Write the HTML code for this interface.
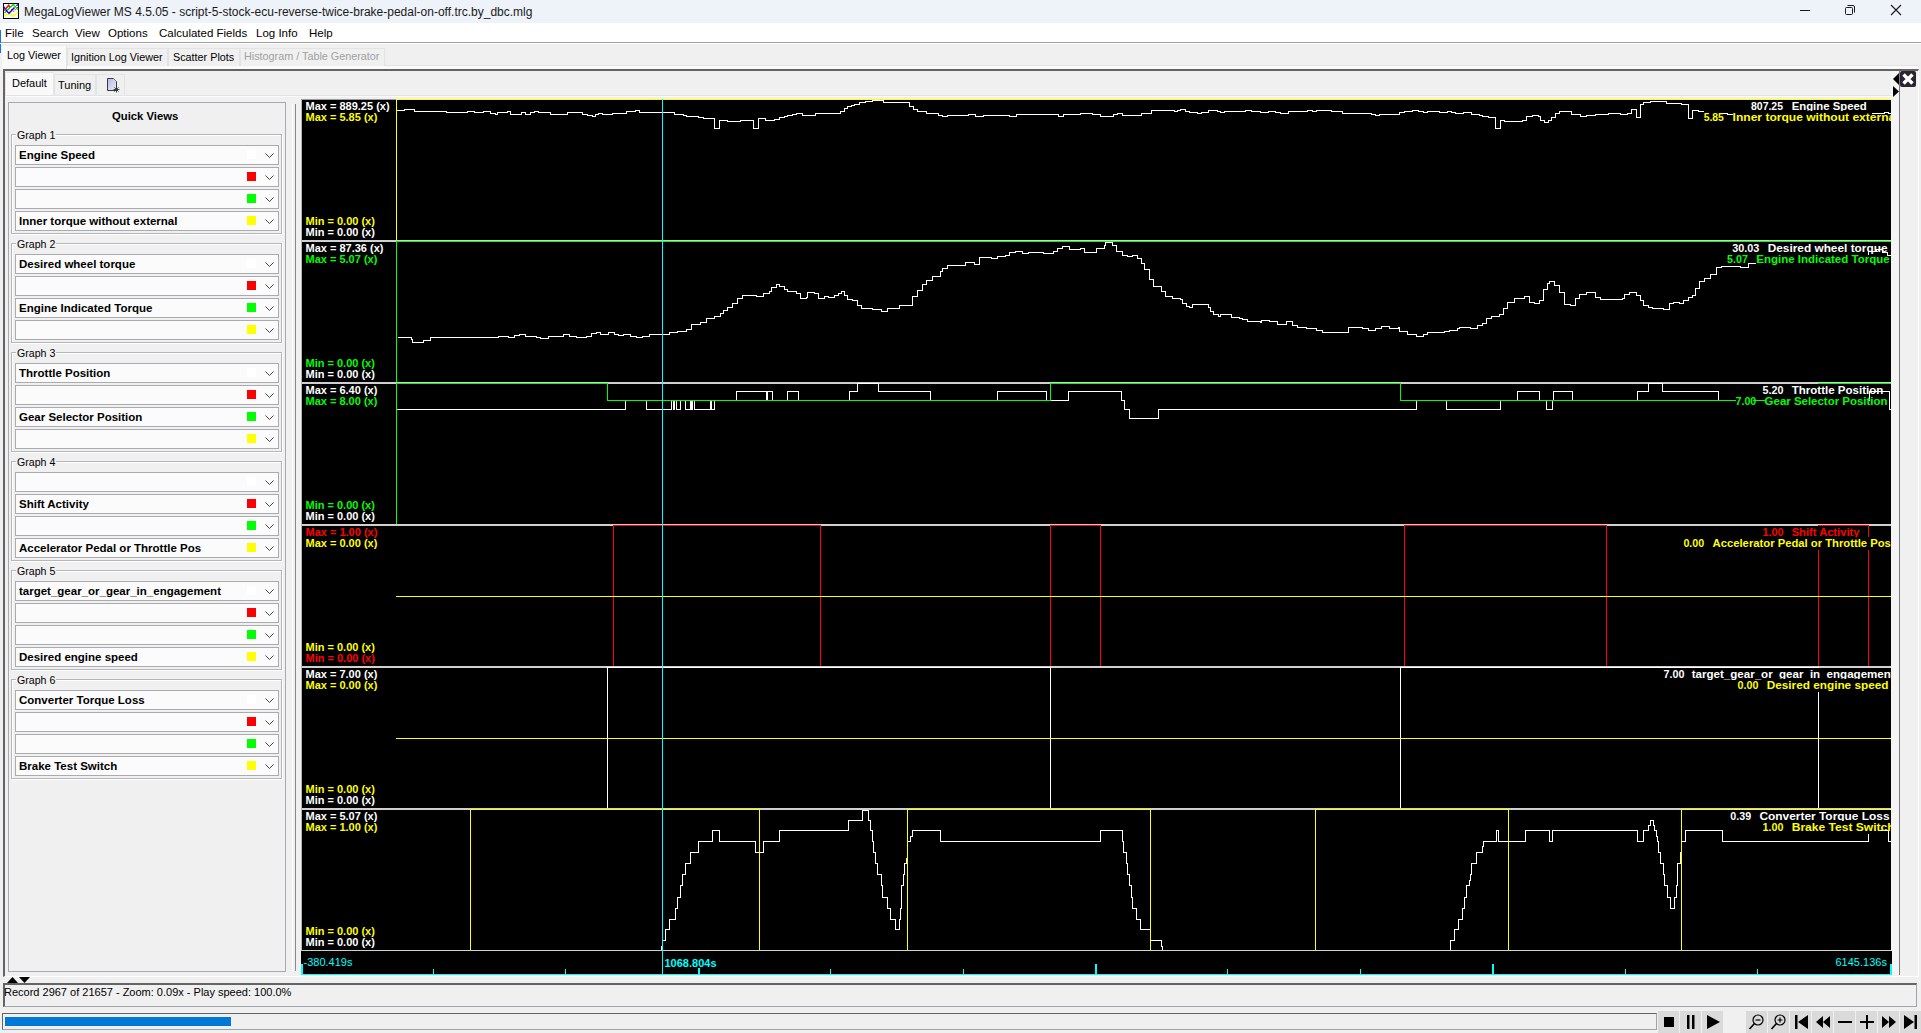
<!DOCTYPE html><html><head><meta charset="utf-8"><title>MegaLogViewer</title><style>
*{box-sizing:border-box;margin:0;padding:0}
html,body{width:1921px;height:1033px;overflow:hidden;background:#f0f0f0;font-family:"Liberation Sans",sans-serif;color:#000}
.a{position:absolute}
.t{position:absolute;white-space:nowrap;line-height:1}
.combo{position:absolute;left:15px;width:264px;height:20px;background:#fbfbfb;border:1px solid #a9abaf}
.combo .lbl{position:absolute;left:3px;top:4px;font-weight:bold;font-size:11.5px;white-space:nowrap;line-height:1}
.combo .sw{position:absolute;left:231px;top:4px;width:9px;height:9px}
.combo svg{position:absolute;left:249px;top:7px}
.grp{position:absolute;left:11px;width:271px;height:100px;border:1px solid #b4b6ba;box-shadow:inset 1px 1px 0 #fff, 1px 1px 0 #fff}
.glbl{position:absolute;left:16px;font-size:10.6px;background:#f0f0f0;padding:0 1px;white-space:nowrap;line-height:1}
</style></head><body>
<div class="a" style="left:0;top:0;width:1921px;height:23px;background:#eef2f9"></div>
<svg class="a" style="left:3px;top:3px" width="16" height="16" viewBox="0 0 16 16">
<rect x="0.5" y="0.5" width="15" height="15" fill="#fff" stroke="#000"/>
<polyline points="1.4,13.5 3.3,12 7.2,10.6 10.1,13.5 14.9,9.3" fill="none" stroke="#ff0" stroke-width="1.5"/>
<polyline points="1.4,10.1 4,7.7 6.7,4.7 10.4,1.4 14.9,6.7" fill="none" stroke="#0d0" stroke-width="1.4"/>
<polyline points="0.4,3.3 4,8.4 6,10.3 11.5,4.5" fill="none" stroke="#00f" stroke-width="1.4"/>
<polyline points="13.5,2.8 14.9,1.4" fill="none" stroke="#00f" stroke-width="1.4"/>
<polyline points="1.3,7.5 5.7,2.2 6.8,4.3" fill="none" stroke="#f00" stroke-width="1.4"/>
<polyline points="10.4,8.5 12.5,6.4" fill="none" stroke="#f00" stroke-width="1.1" stroke-dasharray="1 1"/>
<rect x="8" y="6" width="1" height="1" fill="#f00"/><rect x="14" y="4" width="1" height="1" fill="#f00"/>
</svg>
<div class="t" style="left:24px;top:6px;font-size:12px;color:#1a1a1a">MegaLogViewer MS 4.5.05 - script-5-stock-ecu-reverse-twice-brake-pedal-on-off.trc.by_dbc.mlg</div>
<div class="a" style="left:1800px;top:10px;width:10px;height:1px;background:#1a1a1a"></div>
<svg class="a" style="left:1844px;top:4px" width="12" height="12" viewBox="0 0 12 12"><rect x="1.5" y="3.5" width="7" height="7" rx="1" fill="none" stroke="#1a1a1a"/><path d="M3.5 1.5 H9 a1.5 1.5 0 0 1 1.5 1.5 V8.5" fill="none" stroke="#1a1a1a"/></svg>
<svg class="a" style="left:1890px;top:4px" width="12" height="12" viewBox="0 0 12 12"><path d="M1 1 L11 11 M11 1 L1 11" stroke="#1a1a1a" stroke-width="1.1"/></svg>
<div class="a" style="left:0;top:23px;width:1921px;height:19px;background:#fff"></div>
<div class="a" style="left:0;top:42px;width:1921px;height:1px;background:#a0a0a0"></div>
<div class="t" style="left:5px;top:28px;font-size:11.5px">File</div>
<div class="t" style="left:32px;top:28px;font-size:11.5px">Search</div>
<div class="t" style="left:75px;top:28px;font-size:11.5px">View</div>
<div class="t" style="left:108px;top:28px;font-size:11.5px">Options</div>
<div class="t" style="left:159px;top:28px;font-size:11.5px">Calculated Fields</div>
<div class="t" style="left:256px;top:28px;font-size:11.5px">Log Info</div>
<div class="t" style="left:309px;top:28px;font-size:11.5px">Help</div>
<div class="a" style="left:0;top:30px;width:1px;height:23px;background:#1473e6"></div>
<div class="a" style="left:2px;top:46px;width:65px;height:24px;background:#f9f9f9;border-right:1px solid #e3e3e3"></div>
<div class="t" style="left:7px;top:50px;font-size:10.8px">Log Viewer</div>
<div class="a" style="left:67px;top:48px;width:101px;height:18px;background:#f0f0f0;border:1px solid #e3e3e3;border-bottom:none"></div>
<div class="t" style="left:71px;top:52px;font-size:10.8px">Ignition Log Viewer</div>
<div class="a" style="left:168px;top:48px;width:72px;height:18px;background:#f0f0f0;border:1px solid #e3e3e3;border-bottom:none"></div>
<div class="t" style="left:173px;top:52px;font-size:10.8px">Scatter Plots</div>
<div class="a" style="left:240px;top:48px;width:145px;height:18px;background:#f0f0f0;border:1px solid #e3e3e3;border-bottom:none"></div>
<div class="t" style="left:244px;top:51px;font-size:10.8px;color:#a0a0a0">Histogram / Table Generator</div>
<div class="a" style="left:385px;top:65px;width:1533px;height:1px;background:#e3e3e3"></div>
<div class="a" style="left:67px;top:66px;width:1851px;height:3px;background:#fafafa"></div>
<div class="a" style="left:0;top:43px;width:1921px;height:1px;background:#fff"></div>
<div class="a" style="left:3px;top:69px;width:1916px;height:908px;border-top:2px solid #646464;border-left:2px solid #646464;border-right:1px solid #fff;border-bottom:1px solid #fff"></div>
<div class="a" style="left:5px;top:72px;width:49px;height:24px;background:#f9f9f9;border:1px solid #e6e6e6;border-bottom:none"></div>
<div class="t" style="left:12px;top:78px;font-size:11px">Default</div>
<div class="a" style="left:54px;top:74px;width:42px;height:21px;background:#f0f0f0;border:1px solid #e3e3e3;border-bottom:none"></div>
<div class="t" style="left:58px;top:80px;font-size:11px">Tuning</div>
<div class="a" style="left:96px;top:74px;width:29px;height:21px;background:#f0f0f0;border:1px solid #e3e3e3;border-bottom:none"></div>
<svg class="a" style="left:105px;top:76px" width="16" height="17" viewBox="0 0 16 17"><defs><linearGradient id="dg" x1="0" y1="0" x2="1" y2="1"><stop offset="0" stop-color="#b8b8e8"/><stop offset="1" stop-color="#ececf8"/></linearGradient></defs><path d="M2.5 2.5 H8.5 L11.5 5.5 V14.5 H2.5 Z" fill="url(#dg)" stroke="#3a3a3a"/><path d="M8.5 2.5 L11.5 5.5" stroke="#777"/><path d="M11.5 10.5 V16.5 M8.5 13.5 H14.5 M9.4 11.4 L13.6 15.6 M13.6 11.4 L9.4 15.6" stroke="#333" stroke-width="0.9"/></svg>
<div class="a" style="left:5px;top:95px;width:1886px;height:1px;background:#e3e3e3"></div>
<div class="a" style="left:5px;top:96px;width:1886px;height:1px;background:#fbfbfb"></div>
<div class="a" style="left:8px;top:102px;width:278px;height:870px;border:1px solid #a7aab0"></div>
<div class="t" style="left:112px;top:111px;font-size:11.3px;font-weight:bold">Quick Views</div>
<div class="grp" style="top:134px"></div>
<div class="glbl" style="top:130px">Graph 1</div>
<div class="combo" style="top:145px"><div class="lbl">Engine Speed</div><div class="sw" style="background:#ffffff"></div><svg width="9" height="5" viewBox="0 0 9 5"><path d="M0.5 0.5 L4.5 4.5 L8.5 0.5" fill="none" stroke="#444" stroke-width="1"/></svg></div>
<div class="combo" style="top:167px"><div class="lbl"></div><div class="sw" style="background:#ff0000"></div><svg width="9" height="5" viewBox="0 0 9 5"><path d="M0.5 0.5 L4.5 4.5 L8.5 0.5" fill="none" stroke="#444" stroke-width="1"/></svg></div>
<div class="combo" style="top:189px"><div class="lbl"></div><div class="sw" style="background:#00ff00"></div><svg width="9" height="5" viewBox="0 0 9 5"><path d="M0.5 0.5 L4.5 4.5 L8.5 0.5" fill="none" stroke="#444" stroke-width="1"/></svg></div>
<div class="combo" style="top:211px"><div class="lbl">Inner torque without external</div><div class="sw" style="background:#ffff00"></div><svg width="9" height="5" viewBox="0 0 9 5"><path d="M0.5 0.5 L4.5 4.5 L8.5 0.5" fill="none" stroke="#444" stroke-width="1"/></svg></div>
<div class="grp" style="top:243px"></div>
<div class="glbl" style="top:239px">Graph 2</div>
<div class="combo" style="top:254px"><div class="lbl">Desired wheel torque</div><div class="sw" style="background:#ffffff"></div><svg width="9" height="5" viewBox="0 0 9 5"><path d="M0.5 0.5 L4.5 4.5 L8.5 0.5" fill="none" stroke="#444" stroke-width="1"/></svg></div>
<div class="combo" style="top:276px"><div class="lbl"></div><div class="sw" style="background:#ff0000"></div><svg width="9" height="5" viewBox="0 0 9 5"><path d="M0.5 0.5 L4.5 4.5 L8.5 0.5" fill="none" stroke="#444" stroke-width="1"/></svg></div>
<div class="combo" style="top:298px"><div class="lbl">Engine Indicated Torque</div><div class="sw" style="background:#00ff00"></div><svg width="9" height="5" viewBox="0 0 9 5"><path d="M0.5 0.5 L4.5 4.5 L8.5 0.5" fill="none" stroke="#444" stroke-width="1"/></svg></div>
<div class="combo" style="top:320px"><div class="lbl"></div><div class="sw" style="background:#ffff00"></div><svg width="9" height="5" viewBox="0 0 9 5"><path d="M0.5 0.5 L4.5 4.5 L8.5 0.5" fill="none" stroke="#444" stroke-width="1"/></svg></div>
<div class="grp" style="top:352px"></div>
<div class="glbl" style="top:348px">Graph 3</div>
<div class="combo" style="top:363px"><div class="lbl">Throttle Position</div><div class="sw" style="background:#ffffff"></div><svg width="9" height="5" viewBox="0 0 9 5"><path d="M0.5 0.5 L4.5 4.5 L8.5 0.5" fill="none" stroke="#444" stroke-width="1"/></svg></div>
<div class="combo" style="top:385px"><div class="lbl"></div><div class="sw" style="background:#ff0000"></div><svg width="9" height="5" viewBox="0 0 9 5"><path d="M0.5 0.5 L4.5 4.5 L8.5 0.5" fill="none" stroke="#444" stroke-width="1"/></svg></div>
<div class="combo" style="top:407px"><div class="lbl">Gear Selector Position</div><div class="sw" style="background:#00ff00"></div><svg width="9" height="5" viewBox="0 0 9 5"><path d="M0.5 0.5 L4.5 4.5 L8.5 0.5" fill="none" stroke="#444" stroke-width="1"/></svg></div>
<div class="combo" style="top:429px"><div class="lbl"></div><div class="sw" style="background:#ffff00"></div><svg width="9" height="5" viewBox="0 0 9 5"><path d="M0.5 0.5 L4.5 4.5 L8.5 0.5" fill="none" stroke="#444" stroke-width="1"/></svg></div>
<div class="grp" style="top:461px"></div>
<div class="glbl" style="top:457px">Graph 4</div>
<div class="combo" style="top:472px"><div class="lbl"></div><div class="sw" style="background:#ffffff"></div><svg width="9" height="5" viewBox="0 0 9 5"><path d="M0.5 0.5 L4.5 4.5 L8.5 0.5" fill="none" stroke="#444" stroke-width="1"/></svg></div>
<div class="combo" style="top:494px"><div class="lbl">Shift Activity</div><div class="sw" style="background:#ff0000"></div><svg width="9" height="5" viewBox="0 0 9 5"><path d="M0.5 0.5 L4.5 4.5 L8.5 0.5" fill="none" stroke="#444" stroke-width="1"/></svg></div>
<div class="combo" style="top:516px"><div class="lbl"></div><div class="sw" style="background:#00ff00"></div><svg width="9" height="5" viewBox="0 0 9 5"><path d="M0.5 0.5 L4.5 4.5 L8.5 0.5" fill="none" stroke="#444" stroke-width="1"/></svg></div>
<div class="combo" style="top:538px"><div class="lbl">Accelerator Pedal or Throttle Pos</div><div class="sw" style="background:#ffff00"></div><svg width="9" height="5" viewBox="0 0 9 5"><path d="M0.5 0.5 L4.5 4.5 L8.5 0.5" fill="none" stroke="#444" stroke-width="1"/></svg></div>
<div class="grp" style="top:570px"></div>
<div class="glbl" style="top:566px">Graph 5</div>
<div class="combo" style="top:581px"><div class="lbl">target_gear_or_gear_in_engagement</div><div class="sw" style="background:#ffffff"></div><svg width="9" height="5" viewBox="0 0 9 5"><path d="M0.5 0.5 L4.5 4.5 L8.5 0.5" fill="none" stroke="#444" stroke-width="1"/></svg></div>
<div class="combo" style="top:603px"><div class="lbl"></div><div class="sw" style="background:#ff0000"></div><svg width="9" height="5" viewBox="0 0 9 5"><path d="M0.5 0.5 L4.5 4.5 L8.5 0.5" fill="none" stroke="#444" stroke-width="1"/></svg></div>
<div class="combo" style="top:625px"><div class="lbl"></div><div class="sw" style="background:#00ff00"></div><svg width="9" height="5" viewBox="0 0 9 5"><path d="M0.5 0.5 L4.5 4.5 L8.5 0.5" fill="none" stroke="#444" stroke-width="1"/></svg></div>
<div class="combo" style="top:647px"><div class="lbl">Desired engine speed</div><div class="sw" style="background:#ffff00"></div><svg width="9" height="5" viewBox="0 0 9 5"><path d="M0.5 0.5 L4.5 4.5 L8.5 0.5" fill="none" stroke="#444" stroke-width="1"/></svg></div>
<div class="grp" style="top:679px"></div>
<div class="glbl" style="top:675px">Graph 6</div>
<div class="combo" style="top:690px"><div class="lbl">Converter Torque Loss</div><div class="sw" style="background:#ffffff"></div><svg width="9" height="5" viewBox="0 0 9 5"><path d="M0.5 0.5 L4.5 4.5 L8.5 0.5" fill="none" stroke="#444" stroke-width="1"/></svg></div>
<div class="combo" style="top:712px"><div class="lbl"></div><div class="sw" style="background:#ff0000"></div><svg width="9" height="5" viewBox="0 0 9 5"><path d="M0.5 0.5 L4.5 4.5 L8.5 0.5" fill="none" stroke="#444" stroke-width="1"/></svg></div>
<div class="combo" style="top:734px"><div class="lbl"></div><div class="sw" style="background:#00ff00"></div><svg width="9" height="5" viewBox="0 0 9 5"><path d="M0.5 0.5 L4.5 4.5 L8.5 0.5" fill="none" stroke="#444" stroke-width="1"/></svg></div>
<div class="combo" style="top:756px"><div class="lbl">Brake Test Switch</div><div class="sw" style="background:#ffff00"></div><svg width="9" height="5" viewBox="0 0 9 5"><path d="M0.5 0.5 L4.5 4.5 L8.5 0.5" fill="none" stroke="#444" stroke-width="1"/></svg></div>
<div class="a" style="left:292px;top:104px;width:1px;height:867px;background:#fff"></div>
<div class="a" style="left:295px;top:104px;width:1px;height:867px;background:#8a8a8a"></div>
<svg class="a" style="left:6px;top:976px" width="26" height="8" viewBox="0 0 26 8"><path d="M1 7 L6.5 1 L12 7 Z" fill="#000"/><path d="M13 1 L24 1 L18.5 7 Z" fill="#000"/></svg>
<div class="a" style="left:1891px;top:71px;width:8px;height:904px;background:#f4f4f4"></div>
<div class="a" style="left:1899px;top:71px;width:1px;height:904px;background:#7a7a7a"></div>
<svg class="a" style="left:1892px;top:72px" width="8" height="26" viewBox="0 0 8 26"><path d="M7 1 L1 7 L7 13 Z" fill="#000"/><path d="M1 14 L7 19.5 L1 25 Z" fill="#000"/></svg>
<svg class="a" style="left:1900px;top:71px" width="16" height="16" viewBox="0 0 16 16"><rect x="0" y="0" width="16" height="16" rx="2" fill="#2a2530"/><path d="M3.5 3.5 L12.5 12.5 M12.5 3.5 L3.5 12.5" stroke="#fff" stroke-width="3.4"/></svg>
<div class="a" style="left:3px;top:983px;width:1914px;height:24px;border-top:2px solid #646464;border-left:2px solid #646464;border-right:1px solid #a0a3a8;border-bottom:1px solid #a0a3a8;background:#f0f0f0"></div>
<div class="t" style="left:4px;top:987px;font-size:11px">Record 2967 of 21657 - Zoom: 0.09x - Play speed: 100.0%</div>
<div class="a" style="left:2px;top:1013px;width:1655px;height:17px;border-top:1px solid #646464;border-left:1px solid #646464;border-right:1px solid #a0a3a8;border-bottom:1px solid #a0a3a8;background:#f0f0f0"></div>
<div class="a" style="left:5px;top:1017px;width:226px;height:9px;background:#0078d7"></div>
<svg class="a" style="left:1658px;top:1011px" width="21" height="22" viewBox="0 0 21 22"><rect x="0" y="0" width="21" height="22" fill="#dadada"/><rect x="6" y="6" width="10" height="10" fill="#000"/></svg>
<svg class="a" style="left:1680px;top:1011px" width="21" height="22" viewBox="0 0 21 22"><rect x="0" y="0" width="21" height="22" fill="#dadada"/><rect x="7" y="4" width="2.5" height="14" fill="#000"/><rect x="12" y="4" width="2.5" height="14" fill="#000"/></svg>
<svg class="a" style="left:1702px;top:1011px" width="21" height="22" viewBox="0 0 21 22"><rect x="0" y="0" width="21" height="22" fill="#dadada"/><path d="M5 4 L18 11 L5 18 Z" fill="#000"/></svg>
<svg class="a" style="left:1746px;top:1011px" width="21" height="22" viewBox="0 0 21 22"><rect x="0" y="0" width="21" height="22" fill="#dadada"/><circle cx="12" cy="9" r="5" fill="none" stroke="#000" stroke-width="1.2"/><path d="M9.5 9 h5" stroke="#000" stroke-width="1.2"/><path d="M8.5 12.5 L3.5 18" stroke="#000" stroke-width="1.6"/></svg>
<svg class="a" style="left:1768px;top:1011px" width="21" height="22" viewBox="0 0 21 22"><rect x="0" y="0" width="21" height="22" fill="#dadada"/><circle cx="12" cy="9" r="5" fill="none" stroke="#000" stroke-width="1.2"/><path d="M9.5 9 h5 M12 6.5 v5" stroke="#000" stroke-width="1.2"/><path d="M8.5 12.5 L3.5 18" stroke="#000" stroke-width="1.6"/></svg>
<svg class="a" style="left:1790px;top:1011px" width="21" height="22" viewBox="0 0 21 22"><rect x="0" y="0" width="21" height="22" fill="#dadada"/><rect x="5" y="4" width="2.5" height="14" fill="#000"/><path d="M18 4 L8 11 L18 18 Z" fill="#000"/></svg>
<svg class="a" style="left:1812px;top:1011px" width="21" height="22" viewBox="0 0 21 22"><rect x="0" y="0" width="21" height="22" fill="#dadada"/><path d="M11 5 L4 11 L11 17 Z M18 5 L11 11 L18 17 Z" fill="#000"/></svg>
<svg class="a" style="left:1834px;top:1011px" width="21" height="22" viewBox="0 0 21 22"><rect x="0" y="0" width="21" height="22" fill="#dadada"/><rect x="4" y="10" width="14" height="2" fill="#000"/></svg>
<svg class="a" style="left:1856px;top:1011px" width="21" height="22" viewBox="0 0 21 22"><rect x="0" y="0" width="21" height="22" fill="#dadada"/><rect x="4" y="10" width="14" height="2" fill="#000"/><rect x="10" y="4" width="2" height="14" fill="#000"/></svg>
<svg class="a" style="left:1878px;top:1011px" width="21" height="22" viewBox="0 0 21 22"><rect x="0" y="0" width="21" height="22" fill="#dadada"/><path d="M4 5 L11 11 L4 17 Z M11 5 L18 11 L11 17 Z" fill="#000"/></svg>
<svg class="a" style="left:1900px;top:1011px" width="21" height="22" viewBox="0 0 21 22"><rect x="0" y="0" width="21" height="22" fill="#dadada"/><path d="M4 4 L14 11 L4 18 Z" fill="#000"/><rect x="14.5" y="4" width="2.5" height="14" fill="#000"/></svg>
<svg class="a" style="left:301px;top:99px" width="1591" height="877" viewBox="301 99 1591 877" shape-rendering="crispEdges">
<rect x="301" y="99" width="1590" height="852" fill="#000"/>
<rect x="301" y="99" width="1" height="852" fill="#b4b4b4"/>
<rect x="301" y="99" width="95" height="1" fill="#9a9a9a"/>
<rect x="302" y="240" width="1589" height="2" fill="#d0d0d0"/>
<rect x="302" y="382" width="1589" height="2" fill="#d0d0d0"/>
<rect x="302" y="524" width="1589" height="2" fill="#d0d0d0"/>
<rect x="302" y="666" width="1589" height="2" fill="#d0d0d0"/>
<rect x="302" y="808" width="1589" height="2" fill="#d0d0d0"/>
<rect x="302" y="950" width="1589" height="1" fill="#d0d0d0"/>
<rect x="301" y="951" width="1591" height="23" fill="#000"/>
<rect x="301" y="974" width="1591" height="1" fill="#00ffff"/>
<rect x="301" y="964" width="2" height="10" fill="#00ffff"/>
<rect x="1095" y="964" width="2" height="10" fill="#00ffff"/>
<rect x="1492" y="964" width="2" height="10" fill="#00ffff"/>
<rect x="1890" y="964" width="2" height="10" fill="#00ffff"/>
<rect x="698" y="968" width="2" height="6" fill="#00ffff"/>
<rect x="433" y="969" width="1" height="5" fill="#00ffff"/>
<rect x="565" y="969" width="1" height="5" fill="#00ffff"/>
<rect x="830" y="969" width="1" height="5" fill="#00ffff"/>
<rect x="963" y="969" width="1" height="5" fill="#00ffff"/>
<rect x="1227" y="969" width="1" height="5" fill="#00ffff"/>
<rect x="1360" y="969" width="1" height="5" fill="#00ffff"/>
<rect x="1625" y="969" width="1" height="5" fill="#00ffff"/>
<rect x="1757" y="969" width="1" height="5" fill="#00ffff"/>
<defs><clipPath id="gc"><rect x="302" y="99" width="1589" height="852"/></clipPath></defs>
<g clip-path="url(#gc)">
<text x="305.5" y="110" font-family="Liberation Sans" font-weight="bold" font-size="11" fill="#ffffff" shape-rendering="auto">Max = 889.25 (x)</text>
<text x="305.5" y="121" font-family="Liberation Sans" font-weight="bold" font-size="11" fill="#ffff00" shape-rendering="auto">Max = 5.85 (x)</text>
<text x="305.5" y="225" font-family="Liberation Sans" font-weight="bold" font-size="11" fill="#ffff00" shape-rendering="auto">Min = 0.00 (x)</text>
<text x="305.5" y="236" font-family="Liberation Sans" font-weight="bold" font-size="11" fill="#ffffff" shape-rendering="auto">Min = 0.00 (x)</text>
<text x="305.5" y="252" font-family="Liberation Sans" font-weight="bold" font-size="11" fill="#ffffff" shape-rendering="auto">Max = 87.36 (x)</text>
<text x="305.5" y="263" font-family="Liberation Sans" font-weight="bold" font-size="11" fill="#00ff00" shape-rendering="auto">Max = 5.07 (x)</text>
<text x="305.5" y="367" font-family="Liberation Sans" font-weight="bold" font-size="11" fill="#00ff00" shape-rendering="auto">Min = 0.00 (x)</text>
<text x="305.5" y="378" font-family="Liberation Sans" font-weight="bold" font-size="11" fill="#ffffff" shape-rendering="auto">Min = 0.00 (x)</text>
<text x="305.5" y="394" font-family="Liberation Sans" font-weight="bold" font-size="11" fill="#ffffff" shape-rendering="auto">Max = 6.40 (x)</text>
<text x="305.5" y="405" font-family="Liberation Sans" font-weight="bold" font-size="11" fill="#00ff00" shape-rendering="auto">Max = 8.00 (x)</text>
<text x="305.5" y="509" font-family="Liberation Sans" font-weight="bold" font-size="11" fill="#00ff00" shape-rendering="auto">Min = 0.00 (x)</text>
<text x="305.5" y="520" font-family="Liberation Sans" font-weight="bold" font-size="11" fill="#ffffff" shape-rendering="auto">Min = 0.00 (x)</text>
<text x="305.5" y="536" font-family="Liberation Sans" font-weight="bold" font-size="11" fill="#ff0000" shape-rendering="auto">Max = 1.00 (x)</text>
<text x="305.5" y="547" font-family="Liberation Sans" font-weight="bold" font-size="11" fill="#ffff00" shape-rendering="auto">Max = 0.00 (x)</text>
<text x="305.5" y="651" font-family="Liberation Sans" font-weight="bold" font-size="11" fill="#ffff00" shape-rendering="auto">Min = 0.00 (x)</text>
<text x="305.5" y="662" font-family="Liberation Sans" font-weight="bold" font-size="11" fill="#ff0000" shape-rendering="auto">Min = 0.00 (x)</text>
<text x="305.5" y="678" font-family="Liberation Sans" font-weight="bold" font-size="11" fill="#ffffff" shape-rendering="auto">Max = 7.00 (x)</text>
<text x="305.5" y="689" font-family="Liberation Sans" font-weight="bold" font-size="11" fill="#ffff00" shape-rendering="auto">Max = 0.00 (x)</text>
<text x="305.5" y="793" font-family="Liberation Sans" font-weight="bold" font-size="11" fill="#ffff00" shape-rendering="auto">Min = 0.00 (x)</text>
<text x="305.5" y="804" font-family="Liberation Sans" font-weight="bold" font-size="11" fill="#ffffff" shape-rendering="auto">Min = 0.00 (x)</text>
<text x="305.5" y="820" font-family="Liberation Sans" font-weight="bold" font-size="11" fill="#ffffff" shape-rendering="auto">Max = 5.07 (x)</text>
<text x="305.5" y="831" font-family="Liberation Sans" font-weight="bold" font-size="11" fill="#ffff00" shape-rendering="auto">Max = 1.00 (x)</text>
<text x="305.5" y="935" font-family="Liberation Sans" font-weight="bold" font-size="11" fill="#ffff00" shape-rendering="auto">Min = 0.00 (x)</text>
<text x="305.5" y="946" font-family="Liberation Sans" font-weight="bold" font-size="11" fill="#ffffff" shape-rendering="auto">Min = 0.00 (x)</text>
<rect x="396" y="99" width="1496" height="1" fill="#ffff00"/>
<rect x="396" y="99" width="1" height="141" fill="#ffff00"/>
<path d="M396.5 110.5H404.5V109.5H414.5V111.5H446.5V112.5H467.5V111.5H474.5V112.5H483.5V111.5H490.5V113.5H495.5V114.5H497.5V112.5H507.5V111.5H510.5V114.5H521.5V112.5H525.5V114.5H530.5V112.5H534.5V111.5H538.5V112.5H550.5V114.5H567.5V112.5H582.5V114.5H587.5V115.5H592.5V116.5H595.5V114.5H598.5V113.5H602.5V114.5H612.5V113.5H626.5V111.5H635.5V110.5H639.5V112.5H662.5H674.5V114.5H683.5V115.5H686.5V116.5H698.5V117.5H703.5V118.5H714.5V128.5H719.5V120.5H727.5V121.5H740.5V120.5H753.5V128.5H758.5V118.5H765.5V120.5H774.5V119.5H779.5V117.5H784.5V116.5H787.5V115.5H792.5V114.5H796.5V113.5H802.5V115.5H815.5V113.5H840.5V111.5H844.5V108.5H847.5V106.5H851.5V105.5H854.5V104.5H859.5V102.5H865.5V101.5H872.5V100.5H883.5V102.5H909.5V106.5H913.5V109.5H917.5V111.5H926.5V113.5H938.5V115.5H942.5V116.5H947.5V115.5H968.5V114.5H975.5V116.5H983.5V115.5H1009.5V116.5H1016.5V114.5H1058.5V116.5H1063.5V114.5H1080.5V113.5H1092.5V114.5H1100.5V116.5H1108.5H1113.5V114.5H1117.5V113.5H1122.5V115.5H1141.5V113.5H1151.5V110.5H1157.5H1165.5H1174.5V111.5H1177.5V110.5H1180.5V109.5H1185.5V111.5H1189.5V112.5H1197.5V113.5H1201.5V112.5H1208.5V110.5H1217.5V111.5H1220.5V112.5H1224.5V111.5H1245.5V110.5H1251.5V111.5H1260.5V112.5H1268.5V111.5H1275.5V112.5H1280.5V113.5H1288.5V111.5H1307.5V110.5H1312.5V111.5H1316.5V110.5H1331.5V111.5H1342.5V113.5H1371.5V114.5H1375.5V115.5H1379.5V114.5H1395.5H1399.5V112.5H1404.5V111.5H1412.5V110.5H1418.5V111.5H1423.5V112.5H1427.5V111.5H1439.5V112.5H1447.5V111.5H1451.5V112.5H1455.5V113.5H1463.5V112.5H1471.5V114.5H1479.5V115.5H1482.5V116.5H1488.5V117.5H1495.5V128.5H1500.5V120.5H1504.5V121.5H1522.5V120.5H1526.5V116.5H1532.5V115.5H1538.5V116.5H1540.5V120.5H1544.5V122.5H1548.5V120.5H1551.5V117.5H1555.5V113.5H1559.5V111.5H1571.5V114.5H1580.5V116.5H1586.5V115.5H1595.5V114.5H1606.5H1608.5V113.5H1620.5V114.5H1627.5V113.5H1631.5V109.5H1636.5V117.5H1640.5V104.5H1643.5V102.5H1650.5V101.5H1658.5H1666.5V103.5H1674.5H1681.5V104.5H1688.5V118.5H1692.5V110.5H1698.5V111.5H1704.5V113.5H1727.5V114.5H1736.5V115.5H1760.5H1800.5V114.5H1840.5H1866.5V113.5H1884.5V112.5H1888.5V113.5H1891.5" fill="none" stroke="#ffffff" stroke-width="1"/>
<rect x="396" y="241" width="1496" height="1" fill="#00ff00"/>
<rect x="396" y="241" width="1" height="141" fill="#00ff00"/>
<path d="M397.5 337.5H404.5H407.5H411.5V339.5H412.5V342.5H419.5H423.5V340.5H430.5V337.5H451.5H462.5H466.5H471.5H498.5V336.5H502.5H508.5V337.5H514.5V335.5H519.5V334.5H525.5V336.5H536.5V337.5H540.5V338.5H548.5V336.5H554.5H563.5V334.5H569.5V336.5H576.5V337.5H586.5V336.5H591.5V333.5H596.5V332.5H600.5V334.5H608.5V332.5H614.5V334.5H618.5V335.5H623.5V334.5H630.5V336.5H636.5V337.5H642.5V336.5H649.5V334.5H669.5V332.5H677.5V331.5H686.5V329.5H691.5V324.5H700.5V322.5H706.5V318.5H714.5V316.5H720.5V313.5H723.5V310.5H727.5V307.5H732.5V303.5H737.5V298.5H742.5V295.5H756.5V296.5H763.5V293.5H769.5V291.5H771.5V287.5H776.5V284.5H779.5V286.5H784.5V289.5H787.5V291.5H796.5V293.5H800.5V298.5H806.5V297.5H807.5V292.5H814.5V293.5H818.5V298.5H824.5V296.5H828.5V297.5H834.5V295.5H838.5V293.5H841.5V291.5H844.5V295.5H847.5V299.5H852.5V300.5H857.5V305.5H861.5V308.5H872.5V309.5H881.5V311.5H887.5V308.5H899.5V305.5H912.5V296.5H917.5V290.5H922.5V284.5H926.5V280.5H932.5V276.5H940.5V271.5H942.5V268.5H947.5V265.5H965.5V262.5H974.5V264.5H979.5V257.5H991.5V258.5H997.5V256.5H1005.5V255.5H1009.5V252.5H1015.5V251.5H1022.5V253.5H1028.5V252.5H1043.5V253.5H1053.5V251.5H1057.5V248.5H1062.5V246.5H1069.5V249.5H1080.5V248.5H1084.5V252.5H1091.5H1096.5V248.5H1104.5V245.5H1105.5V242.5H1112.5V245.5H1116.5V251.5H1122.5V255.5H1127.5V256.5H1132.5V255.5H1137.5V258.5H1141.5V263.5H1144.5V269.5H1149.5V279.5H1153.5V286.5H1161.5V291.5H1165.5V296.5H1172.5V298.5H1180.5V299.5H1182.5V303.5H1186.5V306.5H1189.5V307.5H1192.5V304.5H1201.5H1208.5V307.5H1210.5V311.5H1213.5V314.5H1218.5V316.5H1220.5V314.5H1225.5H1231.5V317.5H1239.5V318.5H1242.5V319.5H1247.5V321.5H1260.5V322.5H1261.5V320.5H1269.5V321.5H1277.5V324.5H1286.5V321.5H1292.5V325.5H1297.5V327.5H1306.5V328.5H1316.5V330.5H1322.5V332.5H1343.5H1348.5V327.5H1362.5V328.5H1368.5V330.5H1375.5V328.5H1381.5V326.5H1389.5V328.5H1398.5V327.5H1399.5V331.5H1407.5V334.5H1416.5V336.5H1423.5V334.5H1427.5V332.5H1444.5V331.5H1449.5V330.5H1457.5V328.5H1459.5V327.5H1470.5V328.5H1477.5V325.5H1482.5V323.5H1486.5V318.5H1491.5V316.5H1499.5V314.5H1503.5V308.5H1507.5V302.5H1514.5V298.5H1524.5V296.5H1529.5V302.5H1534.5V303.5H1539.5V300.5H1543.5V289.5H1547.5V283.5H1549.5V281.5H1554.5V285.5H1559.5V292.5H1564.5V304.5H1570.5V305.5H1575.5V298.5H1579.5V294.5H1586.5V292.5H1595.5V297.5H1600.5V299.5H1622.5V298.5H1624.5V294.5H1629.5V292.5H1636.5V295.5H1640.5V300.5H1643.5V305.5H1648.5V307.5H1652.5V308.5H1663.5V309.5H1669.5V303.5H1673.5V302.5H1679.5V303.5H1683.5V300.5H1688.5V297.5H1692.5V295.5H1695.5V288.5H1699.5V281.5H1704.5V278.5H1710.5V274.5H1716.5V267.5H1721.5V266.5H1740.5V267.5H1748.5V263.5H1780.5V262.5H1800.5V258.5H1840.5V254.5H1868.5V251.5H1876.5V249.5H1882.5V252.5H1887.5V255.5H1891.5V256.5" fill="none" stroke="#ffffff" stroke-width="1"/>
<path d="M396.5 409.5H625.5V400.5H646.5V409.5H671.5V400.5H673.5V409.5H674.5V400.5H676.5V409.5H680.5V400.5H685.5V409.5H690.5V400.5H691.5V409.5H692.5V400.5H694.5V409.5H710.5V400.5H711.5V409.5H714.5V400.5H736.5V391.5H766.5V400.5H767.5V391.5H772.5V400.5H787.5V391.5H798.5V400.5H849.5V391.5H857.5V383.5H878.5V391.5H930.5V400.5H997.5V391.5H1046.5V400.5H1068.5V391.5H1121.5V400.5H1124.5V409.5H1129.5V418.5H1158.5V409.5H1416.5V400.5H1446.5V409.5H1500.5V400.5H1517.5V391.5H1539.5V400.5H1546.5V409.5H1552.5V400.5H1553.5V391.5H1572.5V400.5H1637.5V391.5H1648.5V383.5H1662.5V391.5H1718.5V400.5H1869.5V391.5H1889.5V400.5H1889.5V409.5H1891.5" fill="none" stroke="#ffffff" stroke-width="1"/>
<path d="M396.5 523.5H396.5V383.5H607.5V400.5H1050.5V383.5H1400.5V400.5H1818.5V383.5H1891.5" fill="none" stroke="#00ff00" stroke-width="1"/>
<path d="M396.5 666.5H613.5V525.5H820.5V666.5H1050.5V525.5H1100.5V666.5H1404.5V525.5H1606.5V666.5H1818.5V525.5H1868.5V666.5H1891.5" fill="none" stroke="#ff0000" stroke-width="1"/>
<rect x="396" y="596" width="1496" height="1" fill="#ffff00"/>
<path d="M396.5 808.5H607.5V667.5H1050.5V808.5H1400.5V667.5H1818.5V808.5H1891.5" fill="none" stroke="#ffffff" stroke-width="1"/>
<rect x="396" y="738" width="1496" height="1" fill="#ffff00"/>
<path d="M660.5 950.5H661.5V946.5H662.5V940.5H665.5V929.5H669.5V919.5H675.5V908.5H677.5V897.5H680.5V885.5H682.5V874.5H685.5V863.5H690.5V852.5H698.5V841.5H712.5V830.5H719.5V841.5H755.5V852.5H763.5V841.5H779.5V830.5H848.5V820.5H862.5V810.5H868.5V820.5H870.5V830.5H872.5V841.5H873.5V852.5H875.5V863.5H877.5V874.5H881.5V885.5H882.5V897.5H887.5V908.5H890.5V919.5H895.5V929.5H899.5V919.5H900.5V908.5H901.5V885.5H903.5V874.5H904.5V863.5H906.5V858.5H907.5V841.5H910.5V836.5H912.5V830.5H940.5V841.5H1100.5V830.5H1122.5V841.5H1123.5V852.5H1126.5V863.5H1127.5V874.5H1129.5V885.5H1131.5V897.5H1132.5V908.5H1136.5V919.5H1140.5V929.5H1150.5V940.5H1161.5V946.5H1162.5V950.5H1450.5V940.5H1454.5V929.5H1458.5V919.5H1462.5V908.5H1464.5V897.5H1466.5V885.5H1469.5V880.5H1470.5V874.5H1471.5V863.5H1476.5V852.5H1482.5V846.5H1483.5V841.5H1496.5V830.5H1498.5V841.5H1525.5V830.5H1549.5V841.5H1552.5V830.5H1637.5V841.5H1643.5V830.5H1648.5V825.5H1650.5V820.5H1653.5V825.5H1654.5V830.5H1656.5V836.5H1657.5V841.5H1658.5V852.5H1660.5V863.5H1663.5V874.5H1664.5V885.5H1667.5V897.5H1670.5V908.5H1674.5V897.5H1676.5V885.5H1677.5V863.5H1680.5V852.5H1681.5V841.5H1685.5V830.5H1722.5V841.5H1868.5V830.5H1888.5V841.5H1891.5V852.5H1891.5" fill="none" stroke="#ffffff" stroke-width="1"/>
<path d="M396.5 950.5H470.5V809.5H759.5V950.5H907.5V809.5H1150.5V950.5H1315.5V809.5H1508.5V950.5H1681.5V809.5H1891.5V950.5H1891.5" fill="none" stroke="#ffff00" stroke-width="1"/>
<rect x="1751" y="100" width="26.9" height="13" fill="#000"/>
<text x="1751" y="110" font-family="Liberation Sans" font-weight="bold" font-size="11" fill="#ffffff" textLength="32" lengthAdjust="spacingAndGlyphs" shape-rendering="auto">807.25</text>
<rect x="1791.7" y="100" width="63.0" height="13" fill="#000"/>
<text x="1791.7" y="110" font-family="Liberation Sans" font-weight="bold" font-size="11" fill="#ffffff" textLength="75" lengthAdjust="spacingAndGlyphs" shape-rendering="auto">Engine Speed</text>
<rect x="1703.7" y="111" width="17.0" height="13" fill="#000"/>
<text x="1703.7" y="121" font-family="Liberation Sans" font-weight="bold" font-size="11" fill="#ffff00" textLength="20.2" lengthAdjust="spacingAndGlyphs" shape-rendering="auto">5.85</text>
<rect x="1732.6" y="111" width="139.4" height="13" fill="#000"/>
<text x="1732.6" y="121" font-family="Liberation Sans" font-weight="bold" font-size="11" fill="#ffff00" textLength="166" lengthAdjust="spacingAndGlyphs" shape-rendering="auto">Inner torque without external</text>
<rect x="1732.3" y="242" width="22.8" height="13" fill="#000"/>
<text x="1732.3" y="252" font-family="Liberation Sans" font-weight="bold" font-size="11" fill="#ffffff" textLength="27.1" lengthAdjust="spacingAndGlyphs" shape-rendering="auto">30.03</text>
<rect x="1767.7" y="242" width="100.6" height="13" fill="#000"/>
<text x="1767.7" y="252" font-family="Liberation Sans" font-weight="bold" font-size="11" fill="#ffffff" textLength="119.8" lengthAdjust="spacingAndGlyphs" shape-rendering="auto">Desired wheel torque</text>
<rect x="1727.1" y="253" width="17.6" height="13" fill="#000"/>
<text x="1727.1" y="263" font-family="Liberation Sans" font-weight="bold" font-size="11" fill="#00ff00" textLength="20.9" lengthAdjust="spacingAndGlyphs" shape-rendering="auto">5.07</text>
<rect x="1756.3" y="253" width="112.0" height="13" fill="#000"/>
<text x="1756.3" y="263" font-family="Liberation Sans" font-weight="bold" font-size="11" fill="#00ff00" textLength="133.3" lengthAdjust="spacingAndGlyphs" shape-rendering="auto">Engine Indicated Torque</text>
<rect x="1762.5" y="384" width="17.6" height="13" fill="#000"/>
<text x="1762.5" y="394" font-family="Liberation Sans" font-weight="bold" font-size="11" fill="#ffffff" textLength="20.9" lengthAdjust="spacingAndGlyphs" shape-rendering="auto">5.20</text>
<rect x="1791.7" y="384" width="76.9" height="13" fill="#000"/>
<text x="1791.7" y="394" font-family="Liberation Sans" font-weight="bold" font-size="11" fill="#ffffff" textLength="91.6" lengthAdjust="spacingAndGlyphs" shape-rendering="auto">Throttle Position</text>
<rect x="1735.5" y="395" width="17.5" height="13" fill="#000"/>
<text x="1735.5" y="405" font-family="Liberation Sans" font-weight="bold" font-size="11" fill="#00ff00" textLength="20.8" lengthAdjust="spacingAndGlyphs" shape-rendering="auto">7.00</text>
<rect x="1764.6" y="395" width="103.2" height="13" fill="#000"/>
<text x="1764.6" y="405" font-family="Liberation Sans" font-weight="bold" font-size="11" fill="#00ff00" textLength="122.9" lengthAdjust="spacingAndGlyphs" shape-rendering="auto">Gear Selector Position</text>
<rect x="1762.5" y="526" width="17.6" height="13" fill="#000"/>
<text x="1762.5" y="536" font-family="Liberation Sans" font-weight="bold" font-size="11" fill="#ff0000" textLength="20.9" lengthAdjust="spacingAndGlyphs" shape-rendering="auto">1.00</text>
<rect x="1791.7" y="526" width="56.9" height="13" fill="#000"/>
<text x="1791.7" y="536" font-family="Liberation Sans" font-weight="bold" font-size="11" fill="#ff0000" textLength="67.7" lengthAdjust="spacingAndGlyphs" shape-rendering="auto">Shift Activity</text>
<rect x="1683.4" y="537" width="17.5" height="13" fill="#000"/>
<text x="1683.4" y="547" font-family="Liberation Sans" font-weight="bold" font-size="11" fill="#ffff00" textLength="20.8" lengthAdjust="spacingAndGlyphs" shape-rendering="auto">0.00</text>
<rect x="1712.6" y="537" width="169.7" height="13" fill="#000"/>
<text x="1712.6" y="547" font-family="Liberation Sans" font-weight="bold" font-size="11" fill="#ffff00" textLength="202" lengthAdjust="spacingAndGlyphs" shape-rendering="auto">Accelerator Pedal or Throttle Position</text>
<rect x="1663.6" y="668" width="17.6" height="13" fill="#000"/>
<text x="1663.6" y="678" font-family="Liberation Sans" font-weight="bold" font-size="11" fill="#ffffff" textLength="20.9" lengthAdjust="spacingAndGlyphs" shape-rendering="auto">7.00</text>
<rect x="1691.7" y="668" width="170.5" height="13" fill="#000"/>
<text x="1691.7" y="678" font-family="Liberation Sans" font-weight="bold" font-size="11" fill="#ffffff" textLength="203" lengthAdjust="spacingAndGlyphs" shape-rendering="auto">target_gear_or_gear_in_engagement</text>
<rect x="1737.5" y="679" width="17.6" height="13" fill="#000"/>
<text x="1737.5" y="689" font-family="Liberation Sans" font-weight="bold" font-size="11" fill="#ffff00" textLength="20.9" lengthAdjust="spacingAndGlyphs" shape-rendering="auto">0.00</text>
<rect x="1766.7" y="679" width="102.3" height="13" fill="#000"/>
<text x="1766.7" y="689" font-family="Liberation Sans" font-weight="bold" font-size="11" fill="#ffff00" textLength="121.8" lengthAdjust="spacingAndGlyphs" shape-rendering="auto">Desired engine speed</text>
<rect x="1730.3" y="810" width="17.5" height="13" fill="#000"/>
<text x="1730.3" y="820" font-family="Liberation Sans" font-weight="bold" font-size="11" fill="#ffffff" textLength="20.8" lengthAdjust="spacingAndGlyphs" shape-rendering="auto">0.39</text>
<rect x="1759.4" y="810" width="109.4" height="13" fill="#000"/>
<text x="1759.4" y="820" font-family="Liberation Sans" font-weight="bold" font-size="11" fill="#ffffff" textLength="130.2" lengthAdjust="spacingAndGlyphs" shape-rendering="auto">Converter Torque Loss</text>
<rect x="1762.5" y="821" width="17.6" height="13" fill="#000"/>
<text x="1762.5" y="831" font-family="Liberation Sans" font-weight="bold" font-size="11" fill="#ffff00" textLength="20.9" lengthAdjust="spacingAndGlyphs" shape-rendering="auto">1.00</text>
<rect x="1791.7" y="821" width="86.5" height="13" fill="#000"/>
<text x="1791.7" y="831" font-family="Liberation Sans" font-weight="bold" font-size="11" fill="#ffff00" textLength="103" lengthAdjust="spacingAndGlyphs" shape-rendering="auto">Brake Test Switch</text>
</g>
<rect x="302" y="240" width="1589" height="1" fill="#d0d0d0"/>
<rect x="302" y="382" width="1589" height="1" fill="#d0d0d0"/>
<rect x="302" y="524" width="1589" height="1" fill="#d0d0d0"/>
<rect x="302" y="666" width="1589" height="1" fill="#d0d0d0"/>
<rect x="302" y="808" width="1589" height="1" fill="#d0d0d0"/>
<rect x="302" y="950" width="1589" height="1" fill="#d0d0d0"/>
<rect x="662" y="99" width="1" height="876" fill="#00ffff"/>
<text x="303.5" y="966" font-family="Liberation Sans" font-size="11" fill="#00ffff">-380.419s</text>
<text x="664.5" y="967" font-family="Liberation Sans" font-weight="bold" font-size="11" fill="#00ffff">1068.804s</text>
<text x="1835.5" y="966" font-family="Liberation Sans" font-size="11" fill="#00ffff">6145.136s</text>
</svg>
</body></html>
